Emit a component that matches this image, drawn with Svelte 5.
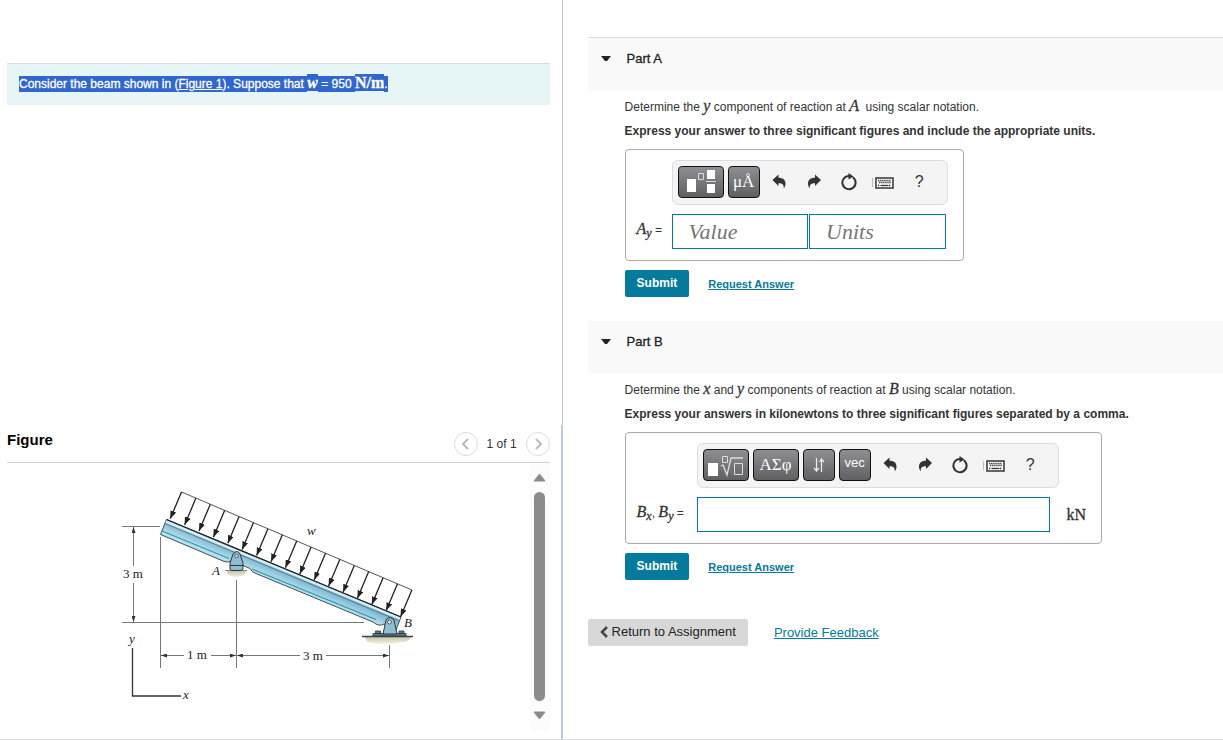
<script lang="ts">
  const loadArrows = Array.from({ length: 17 }, (_, i) => ({
    x: 181.5 + i * 14.4,
    y: 492 + i * 6.12,
  }));

  let answerValue = $state("");
  let answerUnits = $state("");
  let answerB = $state("");
  let openA = $state(true);
  let openB = $state(true);
</script>

{#snippet editIcons()}
  <div class="icons">
    <button type="button" class="icon" aria-label="Undo">
      <svg width="14" height="16" viewBox="0 0 14 16">
        <path d="M.5 6 6.500.5v3.200c4.500 0 7 2 7 6 0 1.800-.7 3.500-1.800 4.800.4-3.300-.9-5.200-5.200-5.200v2.700z" fill="#333" />
      </svg>
    </button>
    <button type="button" class="icon" aria-label="Redo">
      <svg width="14" height="16" viewBox="0 0 14 16">
        <path d="M14 6 8 .5v3.200c-4.500 0-7 2-7 6 0 1.800.7 3.500 1.800 4.800-.4-3.300.9-5.200 5.200-5.200v2.700z" fill="#333" />
      </svg>
    </button>
    <button type="button" class="icon" aria-label="Reset">
      <svg width="18" height="18" viewBox="0 0 18 18">
        <path d="M12.800 4.200A6.600 6.600 0 1 1 9 3" fill="none" stroke="#333" stroke-width="2" />
        <path d="M8.500 0 13.500 3.500 8.500 6.500z" fill="#333" />
      </svg>
    </button>
    <button type="button" class="icon" aria-label="Keyboard shortcuts">
      <svg width="24" height="16" viewBox="0 0 24 16">
        <path d="M.5 4v9" stroke="#bbb" />
        <rect x="4" y="4" width="17" height="10" fill="#fff" stroke="#333" stroke-width="1.500" />
        <path d="M6 6.500h13M7 8.500h12M6 11.500h2M17 11.500h2" stroke="#333" stroke-width="1.400" stroke-dasharray="1.300 .8" />
        <path d="M8.500 11.500h8" stroke="#333" stroke-width="1.300" />
      </svg>
    </button>
    <button type="button" class="icon help" aria-label="Help">?</button>
  </div>
{/snippet}

<main class="page">
  <div class="left">
    <p class="problem">
      <mark>Consider the beam shown in&nbsp;</mark><a href="#figure" class="marked">(<u>Figure 1</u>)</a><mark>. Suppose that&nbsp;</mark><mark class="math">w</mark><mark>&nbsp;= 950&nbsp;</mark><mark class="unit">N/m</mark><mark>.</mark>
    </p>

    <section class="figure" id="figure">
      <header class="figure-head">
        <h2>Figure</h2>
        <div class="pager">
          <button type="button" aria-label="Previous figure">
            <svg width="10" height="12" viewBox="0 0 10 12"><path d="M7 1 2 6l5 5" /></svg>
          </button>
          <span>1 of 1</span>
          <button type="button" aria-label="Next figure">
            <svg width="10" height="12" viewBox="0 0 10 12"><path d="m3 1 5 5-5 5" /></svg>
          </button>
        </div>
      </header>

      <div class="figure-body">
        <svg class="beam" width="310" height="230" viewBox="115 480 310 230" role="img" aria-label="Inclined beam with distributed load w, supported at A and B">
          <defs>
            <linearGradient id="steel" gradientUnits="userSpaceOnUse" x1="284" y1="567" x2="278" y2="581">
              <stop offset="0" stop-color="#5d9fbe" />
              <stop offset=".45" stop-color="#86bed6" />
              <stop offset="1" stop-color="#b9dfec" />
            </linearGradient>
            <linearGradient id="ground" x1="0" y1="0" x2="0" y2="1">
              <stop offset="0" stop-color="#c9c5aa" />
              <stop offset="1" stop-color="#f4f2e6" />
            </linearGradient>
            <marker id="tip" viewBox="0 0 8 6" refX="8" refY="3" markerWidth="8" markerHeight="6" markerUnits="userSpaceOnUse" orient="auto-start-reverse">
              <path d="M0 0 8 3 0 6z" fill="#222" />
            </marker>
            <marker id="dim" viewBox="0 0 6 4" refX="6" refY="2" markerWidth="6" markerHeight="4" markerUnits="userSpaceOnUse" orient="auto-start-reverse">
              <path d="M0 0 6 2 0 4z" fill="#333" />
            </marker>
          </defs>

          <g stroke="#777" stroke-width="1" fill="none">
            <path d="M122 526.500h38M122 622.500h242M160.500 537v131M236.500 580v88M389.500 645v23" />
            <path d="M133.500 566v-39" marker-end="url(#dim)" />
            <path d="M133.500 583v39" marker-end="url(#dim)" />
            <path d="M184 655.500h-23" marker-end="url(#dim)" />
            <path d="M211 655.500h25" marker-end="url(#dim)" />
            <path d="M300 655.500h-63" marker-end="url(#dim)" />
            <path d="M326 655.500h63" marker-end="url(#dim)" />
          </g>
          <path d="M132.500 648v48H181" fill="none" stroke="#333" stroke-width="1.300" />

          <path d="M166.500 519.500 401 617l-5 13-12-6q-5 3-11-2L256 573.500q-4-1-6-5l-18-8q-4 3-9 .5L160.500 534.500z" fill="url(#steel)" stroke="#454c50" />
          <path d="m166 521.500 234 97" stroke="#d5edf4" stroke-width="2.500" />
          <path d="m165 523.500 233 97" stroke="#4b7182" stroke-width=".8" />
          <path d="m162 531 67 27.500M252 569l124 50.500" stroke="#239ab5" stroke-width="1.200" />
          <path d="m166.500 519.500 234.500 97.500" stroke="#222" stroke-width="1.300" />

          <path d="M181.500 492 412 590" stroke="#555" />
          {#each loadArrows as arrow}
            <line x1={arrow.x} y1={arrow.y} x2={arrow.x - 11.3} y2={arrow.y + 26.8} stroke="#222" stroke-width="1.300" marker-end="url(#tip)" />
          {/each}

          <path d="M227 571h19q-1 6-7 5-4 3-7 0-5 0-5-5z" fill="url(#ground)" />
          <path d="M225 570.500h22" stroke="#888" />
          <path d="M230 569v-6l3-9q4-5 7 0l3 9v6q-1 1.500-3 1.500h-7q-3 0-3-1.500z" fill="#8dbfd4" stroke="#333" />
          <path d="M230 565.500h13" stroke="#333" />
          <circle cx="236.500" cy="556" r="1.800" fill="#c5e2ec" stroke="#444" stroke-width=".8" />

          <path d="M365 637h46q-2 6-11 5-7 3-14 1-7 2-13 0-7 0-8-6z" fill="url(#ground)" />
          <path d="M362 636.500h51" stroke="#444" stroke-width="1.300" />
          <path d="M373 633.500h33v2.500h-33zM375.500 631h5v2.500h-5zM399 631h5v2.500h-5z" fill="#527f92" stroke="#333" stroke-width=".8" />
          <path d="m383 634 3-14q4-5 8 0l3 14z" fill="#8dbfd4" stroke="#333" />
          <circle cx="389.500" cy="622" r="2" fill="#d6e8ee" stroke="#444" stroke-width=".8" />

          <g class="labels">
            <text x="123" y="578">3 m</text>
            <text x="187" y="659">1 m</text>
            <text x="303" y="660">3 m</text>
            <text class="it" x="307" y="535">w</text>
            <text class="it" x="212" y="575">A</text>
            <text class="it" x="404" y="627">B</text>
            <text class="it" x="129" y="643">y</text>
            <text class="it" x="183" y="699">x</text>
          </g>
        </svg>

        <div class="scroll" aria-hidden="true">
          <svg width="13" height="9" viewBox="0 0 13 9"><path d="M6.500 1 12 8H1z" /></svg>
          <div class="thumb"></div>
          <svg width="13" height="9" viewBox="0 0 13 9"><path d="M1 1h11L6.500 8z" /></svg>
        </div>
      </div>
    </section>
  </div>

  <div class="right">
    <section class="part first">
      <h2 class="part-head">
        <button type="button" aria-expanded={openA} onclick={() => (openA = !openA)}>
          <svg width="10" height="6" viewBox="0 0 10 6"><path d="M0 0h10L6 5H4z" fill="#222" /></svg>
          Part A
        </button>
      </h2>
      {#if openA}
        <div class="part-body">
          <p>Determine the <i>y</i> component of reaction at <i>A</i>&nbsp; using scalar notation.</p>
          <p><b>Express your answer to three significant figures and include the appropriate units.</b></p>
          <div class="answer">
            <div class="toolbar">
              <button type="button" class="key wide" aria-label="Templates">
                <svg width="30" height="26" viewBox="0 0 30 26">
                  <path d="M1 10h9v13H1zM21 1h8v9h-8zM21 15h8v9h-8z" fill="#fff" />
                  <path d="M12.500 4.500h5v6h-5z" fill="none" stroke="#ddd" />
                  <path d="M20 12.500h10" stroke="#ddd" />
                </svg>
              </button>
              <button type="button" class="key serif" aria-label="Units">μÅ</button>
              {@render editIcons()}
            </div>
            <label class="lead" for="value-a"><i>A<sub>y</sub></i> =</label>
            <div class="fields pair">
              <input id="value-a" type="text" placeholder="Value" bind:value={answerValue} />
              <input type="text" placeholder="Units" aria-label="Units" bind:value={answerUnits} />
            </div>
          </div>
          <div class="actions">
            <button type="button" class="submit">Submit</button>
            <a href="#request-a">Request Answer</a>
          </div>
        </div>
      {/if}
    </section>

    <section class="part">
      <h2 class="part-head">
        <button type="button" aria-expanded={openB} onclick={() => (openB = !openB)}>
          <svg width="10" height="6" viewBox="0 0 10 6"><path d="M0 0h10L6 5H4z" fill="#222" /></svg>
          Part B
        </button>
      </h2>
      {#if openB}
        <div class="part-body">
          <p>Determine the <i>x</i> and <i>y</i> components of reaction at <i>B</i> using scalar notation.</p>
          <p><b>Express your answers in kilonewtons to three significant figures separated by a comma.</b></p>
          <div class="answer with-unit">
            <div class="toolbar">
              <button type="button" class="key wide" aria-label="Templates">
                <svg width="36" height="26" viewBox="0 0 36 26">
                  <path d="M0 11h10v13H0z" fill="#fff" />
                  <path d="M14.500 4.500h5v6h-5zM26.500 11.500h8v11h-8z" fill="none" stroke="#ddd" />
                  <path d="m13 14 2-1 4 10 4-17h12" fill="none" stroke="#ddd" stroke-width="1.300" />
                </svg>
              </button>
              <button type="button" class="key wide serif">ΑΣφ</button>
              <button type="button" class="key" aria-label="Subscript and superscript">
                <svg width="12" height="16" viewBox="0 0 12 16">
                  <path d="M3.500 1v12M1 11l2.500 3L6 11M8.500 15V2M6.500 5l2-3 2.500 3" fill="none" stroke="#eee" stroke-width="1.200" />
                </svg>
              </button>
              <button type="button" class="key vec">vec</button>
              {@render editIcons()}
            </div>
            <label class="lead" for="value-b"><i>B<sub>x</sub></i>, <i>B<sub>y</sub></i> =</label>
            <div class="fields">
              <input id="value-b" type="text" bind:value={answerB} />
              <span class="kn">kN</span>
            </div>
          </div>
          <div class="actions">
            <button type="button" class="submit">Submit</button>
            <a href="#request-b">Request Answer</a>
          </div>
        </div>
      {/if}
    </section>

    <footer>
      <button type="button" class="return">
        <svg width="8" height="12" viewBox="0 0 8 12"><path d="M7 1 2 6l5 5" fill="none" stroke="#444" stroke-width="2.500" /></svg>
        Return to Assignment
      </button>
      <a href="#feedback">Provide Feedback</a>
    </footer>
  </div>
</main>

<style>
  :global(body) {
    margin: 0;
    background: #fff;
  }

  .page {
    box-sizing: border-box;
    min-height: 100vh;
    display: grid;
    grid-template-columns: 46% 1fr;
    border-bottom: 1px solid #d8d8d8;
    color: #333;
    font: 12px/16px "Liberation Sans", Arial, sans-serif;
  }

  button,
  input {
    font: inherit;
    color: inherit;
    margin: 0;
    padding: 0;
    box-sizing: border-box;
  }

  button {
    border: 0;
    background: none;
    cursor: pointer;
  }

  h2,
  p {
    margin: 0;
  }

  a {
    color: #047a9c;
  }

  i,
  .math,
  .unit,
  .kn {
    font-family: "Liberation Serif", "Times New Roman", serif;
    font-size: 16px;
    line-height: 0;
    -webkit-text-stroke: 0.3px;
  }

  sub {
    font-size: 12px;
    line-height: 0;
    vertical-align: -3px;
  }

  .left {
    display: flex;
    flex-direction: column;
    border-right: 1px solid #b8cadb;
    padding: 63px 0 0 7px;
  }

  .problem {
    margin-right: 12px;
    padding: 12px 12px 13px;
    border-top: 1px solid #d9dede;
    background: #e6f6f7;
  }

  mark,
  .marked {
    background: #3166cf;
    color: #fff;
    padding: 1px 0;
    -webkit-text-stroke: 0.3px #fff;
  }

  .marked {
    text-decoration: none;
  }

  mark.math {
    font-style: italic;
    font-weight: bold;
    padding: 0;
  }

  mark.unit {
    font-weight: bold;
    padding: 0;
  }

  .figure {
    margin-top: auto;
    border-right: 1px solid #b8cadb;
    padding: 0 11px 9px 0;
  }

  .figure-head {
    display: flex;
    align-items: center;
    justify-content: space-between;
    height: 37px;
    border-bottom: 1px solid #d3d3d3;
  }

  .figure-head h2 {
    font-size: 15px;
    line-height: 20px;
    color: #000;
    padding-bottom: 7px;
  }

  .pager {
    display: flex;
    align-items: center;
    gap: 9px;
    font-size: 12px;
  }

  .pager button {
    display: grid;
    place-items: center;
    width: 24px;
    height: 24px;
    border: 1px solid #ddd;
    border-radius: 50%;
  }

  .pager path {
    fill: none;
    stroke: #bbb;
    stroke-width: 2;
  }

  .figure-body {
    display: flex;
    justify-content: space-between;
  }

  .beam {
    margin: 17px 0 20px 108px;
  }

  .labels {
    font: 13px "Liberation Serif", serif;
    fill: #222;
  }

  .labels .it {
    font-style: italic;
  }

  .scroll {
    box-sizing: border-box;
    display: flex;
    flex-direction: column;
    align-items: center;
    gap: 10px;
    width: 20px;
    padding: 10px 0;
    background: #fcfcfc;
  }

  .scroll path {
    fill: #8b8b8b;
    stroke: #8b8b8b;
    stroke-linejoin: round;
  }

  .thumb {
    flex: 1;
    width: 11px;
    border-radius: 6px;
    background: #8b8b8b;
  }

  .right {
    padding: 37px 0 0 25px;
  }

  .part {
    margin-bottom: 24px;
  }

  .first {
    border-top: 1px solid #ddd;
  }

  .part-head {
    background: #f9f9f9;
    font-size: 13px;
    font-weight: 400;
    padding: 13px 13px 24px;
  }

  .part-head button {
    display: flex;
    align-items: center;
    gap: 16px;
    color: #222;
    -webkit-text-stroke: 0.3px #222;
  }

  .part-body {
    padding: 8px 16px 0 37px;
  }

  .part-body p {
    margin-bottom: 8px;
  }

  .answer {
    box-sizing: border-box;
    display: inline-grid;
    grid-template-columns: 35px auto;
    align-items: center;
    row-gap: 9px;
    margin-top: 2px;
    padding: 10px 15px 11px 11px;
    border: 1px solid #aaa;
    border-radius: 4px;
    vertical-align: top;
  }

  .with-unit {
    grid-template-columns: 60px auto;
  }

  .toolbar {
    grid-column: 2;
    justify-self: start;
    display: flex;
    align-items: center;
    gap: 4px;
    padding: 5px 10px 6px 5px;
    border: 1px solid #ddd;
    border-radius: 6px;
    background: #f4f4f4;
  }

  .key {
    display: grid;
    place-items: center;
    width: 32px;
    height: 32px;
    border: 1px solid #111;
    border-radius: 4px;
    background: linear-gradient(#8e8e94, #606062);
    color: #fff;
    font-size: 13px;
  }

  .wide {
    width: 46px;
  }

  .serif {
    font-family: "Liberation Serif", serif;
    font-size: 17px;
  }

  .vec {
    padding-bottom: 4px;
  }

  .icons {
    display: flex;
    margin-left: -2px;
  }

  .icon {
    display: grid;
    place-items: center;
    width: 35px;
    height: 32px;
  }

  .help {
    font-size: 16px;
  }

  .lead {
    white-space: nowrap;
    padding-bottom: 3px;
  }

  .fields {
    display: flex;
    align-items: center;
  }

  .fields input {
    width: 353px;
    height: 35px;
    padding: 0 16px;
    border: 1px solid #047a9c;
    background: #fff;
    font: 16px "Liberation Serif", serif;
  }

  .pair {
    gap: 1px;
    padding-right: 2px;
  }

  .pair input {
    flex: 1;
    width: 0;
    font: italic 22px "Liberation Serif", serif;
  }

  input::placeholder {
    color: #757575;
    opacity: 1;
  }

  .kn {
    margin-left: 17px;
  }

  .actions {
    display: flex;
    align-items: center;
    gap: 19px;
    margin-top: 9px;
    font-size: 11px;
    font-weight: bold;
  }

  .submit {
    height: 27px;
    padding: 0 12px 2px;
    border-radius: 2px;
    background: #047a9c;
    color: #fff;
    font-size: 12px;
    font-weight: bold;
  }

  footer {
    display: flex;
    align-items: center;
    gap: 26px;
    margin-top: 39px;
    font-size: 13px;
  }

  .return {
    display: flex;
    align-items: center;
    gap: 4px;
    height: 27px;
    padding: 0 12px 2px;
    border-radius: 2px;
    background: #d8d8d8;
    color: #222;
  }
</style>
